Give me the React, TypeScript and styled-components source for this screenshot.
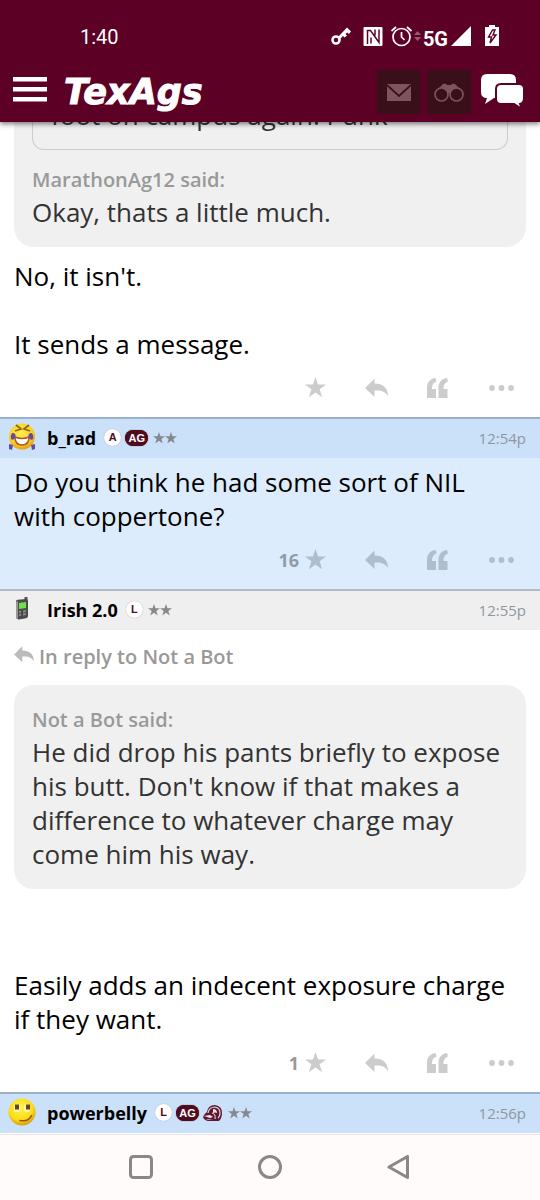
import React from "react";
import styled, { createGlobalStyle } from "styled-components";

const GlobalStyle = createGlobalStyle`
  *, *::before, *::after { box-sizing: border-box; }
  body { margin: 0; background: #fff; font-family: "Open Sans", sans-serif; color: #000; }
  button { margin: 0; padding: 0; border: 0; background: none; color: inherit; font: inherit; cursor: pointer; }
  a { color: inherit; text-decoration: none; }
  p { margin: 0; }
  svg { display: block; flex: none; }
`;

const Page = styled.div`
  display: flex;
  flex-direction: column;
  min-height: 100vh;
`;

const TopBar = styled.header`
  position: sticky;
  top: 0;
  z-index: 2;
  background: #5c0025;
  color: #fff;
  box-shadow: 0 2px 5px rgba(0, 0, 0, 0.5);
`;

const StatusBar = styled.div`
  display: flex;
  align-items: center;
  justify-content: space-between;
  height: 72px;
  padding: 2px 40px 0 80px;
  font: 400 20px/24px Roboto, sans-serif;
`;

const StatusIcons = styled.div`
  display: flex;
  align-items: center;
`;

const NetworkLabel = styled.span`
  margin: 4px 3px 0 0;
  font: 700 20px/20px Roboto, sans-serif;
`;

const AppBar = styled.div`
  display: flex;
  align-items: center;
  height: 50px;
  padding: 0 16px 10px 13px;
`;

const Brand = styled.a`
  margin: 0 auto 0 17px;
  font: italic 700 35px/40px "DejaVu Sans", sans-serif;
  -webkit-text-stroke: 1px #fff;
`;

const BarButton = styled.button`
  display: flex;
  align-items: center;
  justify-content: center;
  height: 44px;
`;

const MenuButton = styled(BarButton)`
  padding-bottom: 4px;
`;

const BoxedButton = styled(BarButton)`
  width: 44px;
  margin-left: 6px;
  border-radius: 3px;
  background: #391019;
  color: #80545f;
`;

const ChatButton = styled(BarButton)`
  margin-left: 10px;
  padding-bottom: 2px;
`;

const ScrollArea = styled.main`
  flex: 1;
  overflow: hidden;
`;

const Thread = styled.div`
  margin-top: -24px;
`;

const Post = styled.article<{ $tinted?: boolean }>`
  background: ${(p) => (p.$tinted ? "#dcecfc" : "#fff")};
  color: ${(p) => (p.$tinted ? "#8f9dab" : "#999")};
  --icon: ${(p) => (p.$tinted ? "#afbecc" : "#ccc")};
`;

const PostHeader = styled.header<{ $tinted?: boolean }>`
  display: flex;
  align-items: center;
  height: 41px;
  padding: 0 14px 2px 8px;
  border-top: 2px solid ${(p) => (p.$tinted ? "#9ab1cb" : "#b2bcc4")};
  background: ${(p) => (p.$tinted ? "#cbe0f9" : "#efefef")};
`;

const Avatar = styled.span`
  display: flex;
  justify-content: center;
  width: 28px;
  margin: 0 11px 2px 0;
`;

const UserName = styled.a`
  margin-right: 8px;
  color: #000;
  font-size: 18px;
  font-weight: 700;
  line-height: 24px;
`;

const Badges = styled.span`
  display: flex;
  align-items: center;
  gap: 4px;
`;

const Tag = styled.span<{ $solid?: boolean }>`
  width: ${(p) => (p.$solid ? "23px" : "17px")};
  height: ${(p) => (p.$solid ? "16px" : "17px")};
  border-radius: 9px;
  background: ${(p) => (p.$solid ? "#500c1c" : "#fff")};
  box-shadow: 0 0 1px ${(p) => (p.$solid ? "#500c1c" : "#999")};
  color: ${(p) => (p.$solid ? "#fff" : "#500c1c")};
  font: 700 11px/17px "Liberation Sans", sans-serif;
  text-align: center;
`;

const StarPair = styled.span`
  display: flex;
  margin-left: 1px;
`;

const Time = styled.time`
  margin-left: auto;
  color: #8f979f;
  font-size: 15px;
  line-height: 24px;
`;

const PostBody = styled.div<{ $pad: number }>`
  padding: ${(p) => p.$pad}px 20px 0 14px;
  color: #000;
  font-size: 26px;
  line-height: 34px;
`;

const Quote = styled.blockquote`
  margin: 0 14px;
  padding: 16px 18px 18px;
  border-radius: 20px;
  background: #f0f0f0;
  color: #333;
  font-size: 26px;
  line-height: 34px;
`;

const FirstQuote = styled(Quote)`
  padding-top: 0;
  border-radius: 0 0 20px 20px;
`;

const NestedQuote = styled.blockquote`
  margin: 0 0 11px;
  padding: 0 18px 17px;
  border: 1px solid #ccc;
  border-top: 0;
  border-radius: 0 0 12px 12px;
`;

const Said = styled.cite`
  display: block;
  padding: 4px 0 0;
  color: #999;
  font-size: 20px;
  font-style: normal;
  font-weight: 600;
  line-height: 30px;
`;

const ReplyTo = styled.a`
  display: flex;
  align-items: center;
  gap: 5px;
  padding: 12px 14px 13px;
  color: #999;
  font-size: 20px;
  font-weight: 600;
  line-height: 30px;
  svg { margin-bottom: 6px; }
`;

const Actions = styled.footer`
  display: flex;
  align-items: center;
  justify-content: flex-end;
  gap: 39px;
  height: 56px;
  padding: 0 26px 3px 14px;
`;

const Action = styled.button`
  display: flex;
  align-items: center;
  gap: 6px;
  min-height: 28px;
  font-size: 18px;
  font-weight: 700;
  line-height: 24px;
  svg { fill: var(--icon); }
`;

const NavBar = styled.nav`
  position: sticky;
  bottom: 0;
  display: flex;
  align-items: center;
  justify-content: center;
  gap: 105px;
  height: 66px;
  padding-bottom: 2px;
  border-top: 1px solid #e4e0e4;
  background: #fffbfa;
`;

const STAR = "M12 0l2.900 8.600H24l-7.300 5.400 2.800 9L12 17.600 4.500 23l2.800-9L0 8.600h9.100z";
const REPLY = "M0 11L9.500 1.500v5C18 6.500 23 11 23 19c-3-5-7-6-13.500-5.500v6.500z";

const Star = ({ size, fill }: { size: number; fill?: string }) => (
  <svg width={size} height={size} viewBox="0 0 24 24" fill={fill}><path d={STAR} /></svg>
);

const Stars = () => (
  <StarPair>
    <Star size={12} fill="#85888c" />
    <Star size={12} fill="#85888c" />
  </StarPair>
);

const PostActions = ({ count }: { count?: number }) => (
  <Actions>
    <Action aria-label="Star">{count}<Star size={21} /></Action>
    <Action aria-label="Reply">
      <svg width="23" height="21" viewBox="0 0 23 21"><path d={REPLY} /></svg>
    </Action>
    <Action aria-label="Quote">
      <svg width="21" height="20" viewBox="0 0 21 20">
        <path d="M0 20V10C0 4 3.500.5 8.500 0l1 3.500C6.500 4.500 5 6.500 5 11h4v9zM11.500 20V10C11.500 4 15 .5 20 0l1 3.500C18 4.500 16.500 6.500 16.500 11h4v9z" />
      </svg>
    </Action>
    <Action aria-label="More">
      <svg width="27" height="6" viewBox="0 0 27 6">
        <circle cx="5" cy="3" r="2.900" /><circle cx="14.500" cy="3" r="2.900" /><circle cx="24" cy="3" r="2.900" />
      </svg>
    </Action>
  </Actions>
);

const LaughFace = () => (
  <svg width="28" height="28" viewBox="0 0 28 28">
    <defs>
      <radialGradient id="laugh" cx="45%" cy="35%" r="65%">
        <stop offset="0" stopColor="#ffed55" /><stop offset="0.700" stopColor="#fbcf1e" /><stop offset="1" stopColor="#e0a010" />
      </radialGradient>
    </defs>
    <circle cx="14" cy="13.500" r="13" fill="url(#laugh)" />
    <path d="M8 2l5 4-6 2M21 2l-5 4 6 2" fill="none" stroke="#8c6a14" strokeWidth="1.800" />
    <path d="M7 14q7 3 14 0 0 8-7 8t-7-8z" fill="#fff" stroke="#b5562c" strokeWidth="1.500" />
    <path d="M4 10q5 0 3 5-2 3-4 1-1-3 1-6zM24 10q-5 0-3 5 2 3 4 1 1-3-1-6zM1 21l4 1-1 5-3-1zM27 21l-4 1 1 5 3-1z" fill="#654a9e" />
  </svg>
);

const PhoneIcon = () => (
  <svg width="14" height="23" viewBox="0 0 14 23">
    <path d="M9.500 0h3v4h-3z" fill="#555" />
    <path d="M1 4.500Q1 3 2.500 2.700L11 2q2 0 2 2v15q0 2-2 2.300L4 22.500q-2.500 0-3-2z" fill="#4b4b4b" />
    <path d="M1 5l2-1v18l-2-1.500z" fill="#999" />
    <path d="M4 6l7-1v6l-7 1z" fill="#70df4a" />
    <path d="M4 14l2-.3v2l-2 .3zM8 13.500l3-.4v2l-3 .3zM4 17l2-.3v2l-2 .3zM8 16.500l3-.4v2l-3 .3z" fill="#8b8b8b" />
  </svg>
);

const SmirkFace = () => (
  <svg width="28" height="28" viewBox="0 0 28 28">
    <defs>
      <radialGradient id="smirk" cx="45%" cy="35%" r="65%">
        <stop offset="0" stopColor="#fff34a" /><stop offset="0.700" stopColor="#fadc17" /><stop offset="1" stopColor="#d99a0c" />
      </radialGradient>
    </defs>
    <circle cx="14" cy="14" r="13.500" fill="url(#smirk)" />
    <rect x="6" y="6" width="6" height="8" rx="2" fill="#fff3b0" /><rect x="16" y="6" width="6" height="8" rx="2" fill="#fff3b0" />
    <path d="M7 6.500h4v5H7zM18 6.500h4v5h-4z" fill="#5f4a18" />
    <path d="M12 22.500q9 1.500 11.500-5" fill="none" stroke="#9d5510" strokeWidth="1.600" strokeLinecap="round" />
  </svg>
);

const HelmetBadge = () => (
  <svg width="20" height="18" viewBox="0 0 20 18">
    <path d="M4 8Q5 1 12 1q7 1 7 8 0 5-3 8H5q-4-1-5-4 1-3 4-5z" fill="#5d1830" />
    <path d="M5 9q1-6 7-6 5 1 5 6 0 3-2 5" fill="none" stroke="#e6d9df" strokeWidth="1.200" />
    <path d="M10 5q4 0 4 4-2-1-4 0zM1 12l6-1 3 2-3 1zM3 15l7 1H5z" fill="#f1e8ed" />
    <path d="M9 9q4 1 3 6" fill="none" stroke="#f1e8ed" />
  </svg>
);

export default function App() {
  return (
    <>
      <GlobalStyle />
      <Page>
        <TopBar>
          <StatusBar>
            <span>1:40</span>
            <StatusIcons>
              <svg width="94" height="24" viewBox="0 0 94 24" fill="#fff">
                <path d="M8.500 12.500L18 2.500l4 4-2 2.500-2-1.500-1.500 1.500 1.500 1.500-2.500 2-1.500-1.500-3 3z" />
                <circle cx="7" cy="15" r="3.500" fill="none" stroke="#fff" strokeWidth="2.600" />
                <rect x="34.500" y="2" width="19" height="19" rx="1" />
                <path d="M38.500 19V5.500l3 0L50 17.500V4.500M46 4.500v6M42 12.500v6" fill="none" stroke="#5c0025" strokeWidth="1.500" />
                <circle cx="72.500" cy="12" r="8.500" fill="none" stroke="#fff" strokeWidth="1.700" />
                <path d="M72.500 7v5l3 3M62.500 6L67 2M78 2l4.500 4" fill="none" stroke="#fff" strokeWidth="1.700" />
                <path d="M85 10l3.500-4 3.500 4zM85 12l3.500 4 3.500-4z" fill="#965c72" />
              </svg>
              <NetworkLabel>5G</NetworkLabel>
              <svg width="49" height="24" viewBox="0 0 49 24" fill="#fff">
                <path d="M0 21L20 1v20zM35 2h3V0h6v2h4v19H34V2z" />
                <path d="M41.500 5l-4 7h3l-1.500 6 6-8h-3l2-5z" fill="none" stroke="#5c0025" strokeWidth="1.400" />
              </svg>
            </StatusIcons>
          </StatusBar>
          <AppBar>
            <MenuButton aria-label="Menu">
              <svg width="34" height="26" viewBox="0 0 34 26" fill="#fff">
                <path d="M0 0h34v4.500H0zM0 10h34v4.500H0zM0 20h34v4.500H0z" />
              </svg>
            </MenuButton>
            <Brand href="#">TexAgs</Brand>
            <BoxedButton aria-label="Mail">
              <svg width="24" height="17" viewBox="0 0 24 17">
                <path d="M0 0h24v17H0z" fill="currentColor" />
                <path d="M0 1l12 11L24 1" fill="none" stroke="#391019" strokeWidth="1.800" />
              </svg>
            </BoxedButton>
            <BoxedButton aria-label="Watched">
              <svg width="30" height="19" viewBox="0 0 30 19">
                <path d="M4 6l5-5q3-1 4 1h4q1-2 4-1l5 5-9 4h-4z" fill="currentColor" />
                <circle cx="7.500" cy="11.500" r="6.500" fill="#391019" stroke="currentColor" strokeWidth="1.600" />
                <circle cx="22.500" cy="11.500" r="6.500" fill="#391019" stroke="currentColor" strokeWidth="1.600" />
              </svg>
            </BoxedButton>
            <ChatButton aria-label="Forums">
              <svg width="43" height="35" viewBox="0 0 43 35" fill="#fff">
                <path d="M6 0h23q6 0 6 6v16q0 2-3 2H13l-9 6 2-6q-6 0-6-6V6q0-6 6-6z" />
                <path d="M20 10h18q5 0 5 5v9q0 5-4 6l2 5-8-5H20q-5 0-5-5V15q0-5 5-5z" stroke="#5c0025" strokeWidth="2" />
              </svg>
            </ChatButton>
          </AppBar>
        </TopBar>

        <ScrollArea>
          <Thread>
            <Post>
              <FirstQuote>
                <NestedQuote>foot on campus again. Punk</NestedQuote>
                <Said>MarathonAg12 said:</Said>
                <p>Okay, thats a little much.</p>
              </FirstQuote>
              <PostBody $pad={12}>
                <p>No, it isn't.</p>
                <br />
                <p>It sends a message.</p>
              </PostBody>
              <PostActions />
            </Post>

            <Post $tinted>
              <PostHeader $tinted>
                <Avatar><LaughFace /></Avatar>
                <UserName href="#">b_rad</UserName>
                <Badges><Tag>A</Tag><Tag $solid>AG</Tag><Stars /></Badges>
                <Time>12:54p</Time>
              </PostHeader>
              <PostBody $pad={7}><p>Do you think he had some sort of NIL with coppertone?</p></PostBody>
              <PostActions count={16} />
            </Post>

            <Post>
              <PostHeader>
                <Avatar><PhoneIcon /></Avatar>
                <UserName href="#">Irish 2.0</UserName>
                <Badges><Tag>L</Tag><Stars /></Badges>
                <Time>12:55p</Time>
              </PostHeader>
              <ReplyTo href="#">
                <svg width="20" height="18" viewBox="0 0 23 21" fill="#bbb"><path d={REPLY} /></svg>
                In reply to Not a Bot
              </ReplyTo>
              <Quote>
                <Said>Not a Bot said:</Said>
                <p>He did drop his pants briefly to expose his butt. Don't know if that makes a difference to whatever charge may come him his way.</p>
              </Quote>
              <PostBody $pad={11}>
                <br />
                <br />
                <p>Easily adds an indecent exposure charge if they want.</p>
              </PostBody>
              <PostActions count={1} />
            </Post>

            <Post $tinted>
              <PostHeader $tinted>
                <Avatar><SmirkFace /></Avatar>
                <UserName href="#">powerbelly</UserName>
                <Badges><Tag>L</Tag><Tag $solid>AG</Tag><HelmetBadge /><Stars /></Badges>
                <Time>12:56p</Time>
              </PostHeader>
            </Post>
          </Thread>
        </ScrollArea>

        <NavBar>
          <button aria-label="Recent apps">
            <svg width="24" height="24" viewBox="0 0 24 24" fill="none" stroke="#8b8787" strokeWidth="3">
              <rect x="1.500" y="1.500" width="21" height="21" rx="3" />
            </svg>
          </button>
          <button aria-label="Home">
            <svg width="24" height="24" viewBox="0 0 24 24" fill="none" stroke="#8b8787" strokeWidth="3">
              <circle cx="12" cy="12" r="10.500" />
            </svg>
          </button>
          <button aria-label="Back">
            <svg width="24" height="24" viewBox="0 0 24 24" fill="none" stroke="#8b8787" strokeWidth="3" strokeLinejoin="round">
              <path d="M2 12L20.500 1.500v21z" />
            </svg>
          </button>
        </NavBar>
      </Page>
    </>
  );
}
